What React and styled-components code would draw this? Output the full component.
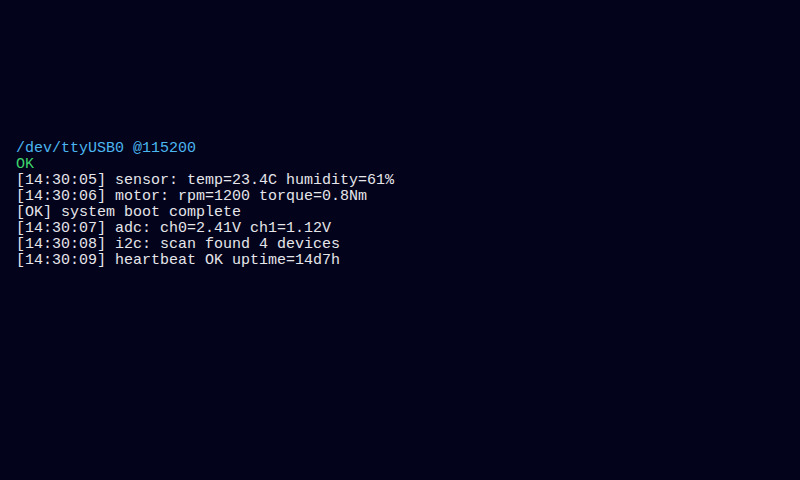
import React from "react";
import styled, { createGlobalStyle } from "styled-components";

const lines = [
  { text: "/dev/ttyUSB0 @115200", kind: "port" },
  { text: "OK", kind: "ok" },
  { text: "[14:30:05] sensor: temp=23.4C humidity=61%" },
  { text: "[14:30:06] motor: rpm=1200 torque=0.8Nm" },
  { text: "[OK] system boot complete" },
  { text: "[14:30:07] adc: ch0=2.41V ch1=1.12V" },
  { text: "[14:30:08] i2c: scan found 4 devices" },
  { text: "[14:30:09] heartbeat OK uptime=14d7h" },
];

const GlobalStyle = createGlobalStyle`
  html, body {
    margin: 0;
    padding: 0;
    background: #03031c;
  }
`;

const colors = {
  port: "#4bb6ef",
  ok: "#3ed46b",
  default: "#e6e6ea",
};

const Screen = styled.div`
  width: 800px;
  height: 480px;
  box-sizing: border-box;
  background: #03031c;
  padding: 141px 16px 0;
  font-family: "Liberation Mono", "DejaVu Sans Mono", monospace;
  font-size: 15px;
  line-height: 16px;
`;

const Line = styled.div`
  white-space: pre;
  color: ${(p) => colors[p.$kind] || colors.default};
`;

export default function App() {
  return (
    <>
      <GlobalStyle />
      <Screen>
        {lines.map((l, i) => (
          <Line key={i} $kind={l.kind}>
            {l.text}
          </Line>
        ))}
      </Screen>
    </>
  );
}
